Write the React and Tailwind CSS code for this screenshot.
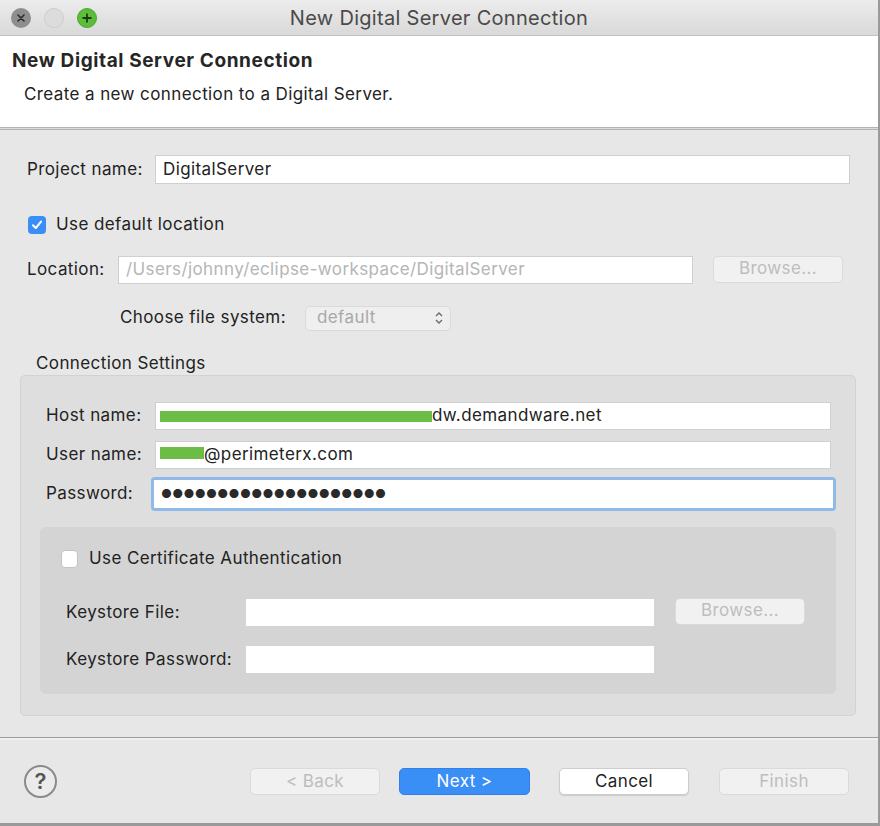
import React from "react";

const font = { fontFamily: "Inter, 'Open Sans', sans-serif" };

function Field({ value, className = "", muted = false, children }) {
  return (
    <div
      className={`h-[28px] bg-white border border-[#cfcfcf] flex items-center px-[7px] whitespace-nowrap overflow-hidden ${
        muted ? "text-[#b5b5b5]" : "text-[#222]"
      } ${className}`}
    >
      {value}
      {children}
    </div>
  );
}

function MacButton({ label, variant = "disabled", className = "" }) {
  const styles = {
    disabled: "bg-[#f1f1f1] border-[#dadada] text-[#bdbdbd]",
    normal: "bg-white border-[#cdcdcd] text-[#222] shadow-[0_1px_1px_rgba(0,0,0,0.12)]",
    primary: "bg-[#3a8ff7] border-[#2f80ea] text-white",
  };
  return (
    <div
      className={`h-[27px] w-[130px] shrink-0 rounded-[5px] border flex items-center justify-center ${styles[variant]} ${className}`}
    >
      {label}
    </div>
  );
}

function Checkbox({ checked }) {
  return checked ? (
    <div className="w-[18px] h-[18px] shrink-0 rounded-[4px] bg-[#3b8ef5] flex items-center justify-center">
      <svg width="12" height="12" viewBox="0 0 12 12">
        <path d="M2 6.3 L4.8 9 L10 2.6" fill="none" stroke="white" strokeWidth="2" strokeLinecap="round" strokeLinejoin="round" />
      </svg>
    </div>
  ) : (
    <div className="w-[17px] h-[18px] shrink-0 rounded-[4px] bg-white border border-[#c4c4c4]" />
  );
}

export default function App() {
  return (
    <div style={font} className="w-[880px] h-[826px] bg-[#e7e7e7] flex flex-col overflow-hidden border-r-2 border-[#9a9a9a] text-[#222] text-[17px] tracking-[0.4px]">
      {/* Title bar */}
      <div className="h-[36px] shrink-0 bg-gradient-to-b from-[#ececec] to-[#d9d9d9] border-b border-[#c2c2c2] flex items-center relative">
        <div className="flex items-center gap-[13px] pl-[11px]">
          <div className="w-[20px] h-[20px] rounded-full bg-[#8e8e8e] flex items-center justify-center">
            <svg width="10" height="10" viewBox="0 0 10 10">
              <path d="M2 2 L8 8 M8 2 L2 8" stroke="#2b2b2b" strokeWidth="1.6" strokeLinecap="round" />
            </svg>
          </div>
          <div className="w-[20px] h-[20px] rounded-full bg-[#dcdcdc] border border-[#cdcdcd]" />
          <div className="w-[20px] h-[20px] rounded-full bg-[#5cbd3a] border border-[#4fa52f] flex items-center justify-center">
            <svg width="12" height="12" viewBox="0 0 12 12">
              <path d="M6 1.5 V10.5 M1.5 6 H10.5" stroke="#1f3a12" strokeWidth="1.8" />
            </svg>
          </div>
        </div>
        <div className="absolute left-0 right-0 text-center text-[20px] tracking-[0.3px] text-[#4a4a4a] pointer-events-none">
          New Digital Server Connection
        </div>
      </div>

      {/* Banner */}
      <div className="h-[91px] shrink-0 bg-white pl-[12px] pt-[12px]">
        <div className="text-[19px] font-bold tracking-[0.6px] text-[#262626] leading-[26px]">New Digital Server Connection</div>
        <div className="pl-[12px] mt-[9px] text-[#222] leading-[22px]">Create a new connection to a Digital Server.</div>
      </div>
      <div className="h-[3px] shrink-0 border-t border-b border-[#b3b3b3] bg-[#dcdcdc]" />

      {/* Body */}
      <div className="flex-1 flex flex-col pl-[20px] pr-[22px] pt-[25px]">
        <div className="flex items-center h-[29px] pl-[7px] pr-[6px]">
          <div className="w-[128px] shrink-0">Project name:</div>
          <Field value="DigitalServer" className="flex-1 h-[29px]" />
        </div>

        <div className="flex items-center h-[18px] mt-[32px] pl-[8px] gap-[10px]">
          <Checkbox checked />
          <span>Use default location</span>
        </div>

        <div className="flex items-center h-[28px] mt-[22px] pl-[7px]">
          <div className="w-[91px] shrink-0">Location:</div>
          <Field value="/Users/johnny/eclipse-workspace/DigitalServer" muted className="w-[575px] shrink-0" />
          <MacButton label="Browse..." className="ml-[20px] h-[26px] -mt-[2px]" />
        </div>

        <div className="flex items-center h-[26px] mt-[21px] pl-[100px]">
          <div className="w-[185px] shrink-0">Choose file system:</div>
          <div className="w-[146px] h-[25px] rounded-[5px] bg-[#efefef] border border-[#dadada] flex items-center justify-between pl-[11px] pr-[6px] text-[#a8a8a8]">
            default
            <svg width="10" height="14" viewBox="0 0 10 14">
              <path d="M2 5 L5 2 L8 5 M2 9 L5 12 L8 9" fill="none" stroke="#6b6b6b" strokeWidth="1.4" />
            </svg>
          </div>
        </div>

        <div className="mt-[22px] pl-[16px] leading-[20px]">Connection Settings</div>

        {/* Connection group */}
        <div className="mt-[2px] h-[341px] rounded-[5px] bg-[#dedede] border border-[#d2d2d2] pl-[25px] pr-[24px] pt-[26px] flex flex-col">
          <div className="flex items-center h-[28px]">
            <div className="w-[109px] shrink-0">Host name:</div>
            <Field className="flex-1 !px-[4px]">
              <span className="inline-block w-[272px] h-[11px] bg-[#6cbd45] shrink-0" />
              <span>dw.demandware.net</span>
            </Field>
          </div>
          <div className="flex items-center h-[28px] mt-[11px]">
            <div className="w-[109px] shrink-0">User name:</div>
            <Field className="flex-1 !px-[4px]">
              <span className="inline-block w-[44px] h-[12px] bg-[#6cbd45] shrink-0 -mt-[4px]" />
              <span>@perimeterx.com</span>
            </Field>
          </div>
          <div className="flex items-center h-[34px] mt-[8px]">
            <div className="w-[105px] shrink-0">Password:</div>
            <div className="flex-1 h-[34px] rounded-[4px] bg-[#8fb9e6] p-[3px] -mr-[5px]">
              <div className="h-[28px] bg-white flex items-center px-[7px] text-[12px] tracking-[0.3px] text-[#2a2a2a]">
                ●●●●●●●●●●●●●●●●●●●●
              </div>
            </div>
          </div>

          {/* Certificate group */}
          <div className="mt-[16px] h-[167px] -ml-[6px] -mr-[5px] rounded-[6px] bg-[#d4d4d4] pl-[21px] pt-[23px] flex flex-col">
            <div className="flex items-center h-[18px] gap-[11px]">
              <Checkbox />
              <span>Use Certificate Authentication</span>
            </div>
            <div className="flex items-center h-[27px] mt-[31px] pl-[5px]">
              <div className="w-[180px] shrink-0">Keystore File:</div>
              <div className="w-[408px] h-[27px] bg-white shrink-0" />
              <MacButton label="Browse..." className="ml-[21px] h-[25px] w-[129px] -mt-[3px] bg-[#e9e9e9]" />
            </div>
            <div className="flex items-center h-[27px] mt-[20px] pl-[5px]">
              <div className="w-[180px] shrink-0">Keystore Password:</div>
              <div className="w-[408px] h-[27px] bg-white shrink-0" />
            </div>
          </div>
        </div>
      </div>

      {/* Separator */}
      <div className="h-[3px] shrink-0 border-t border-[#9d9d9d] bg-[#efefef] mt-[21px]" />

      {/* Footer */}
      <div className="h-[86px] shrink-0 flex items-center pl-[24px] pr-[29px] border-b-[3px] border-[#9a9a9a]">
        <div className="w-[33px] h-[33px] rounded-full border-2 border-[#8a8a8a] flex items-center justify-center text-[22px] font-semibold text-[#555] bg-[#ebebeb] tracking-normal">
          ?
        </div>
        <div className="flex-1" />
        <MacButton label="< Back" />
        <MacButton label="Next >" variant="primary" className="ml-[19px] w-[131px]" />
        <MacButton label="Cancel" variant="normal" className="ml-[29px]" />
        <MacButton label="Finish" className="ml-[30px]" />
      </div>
    </div>
  );
}
